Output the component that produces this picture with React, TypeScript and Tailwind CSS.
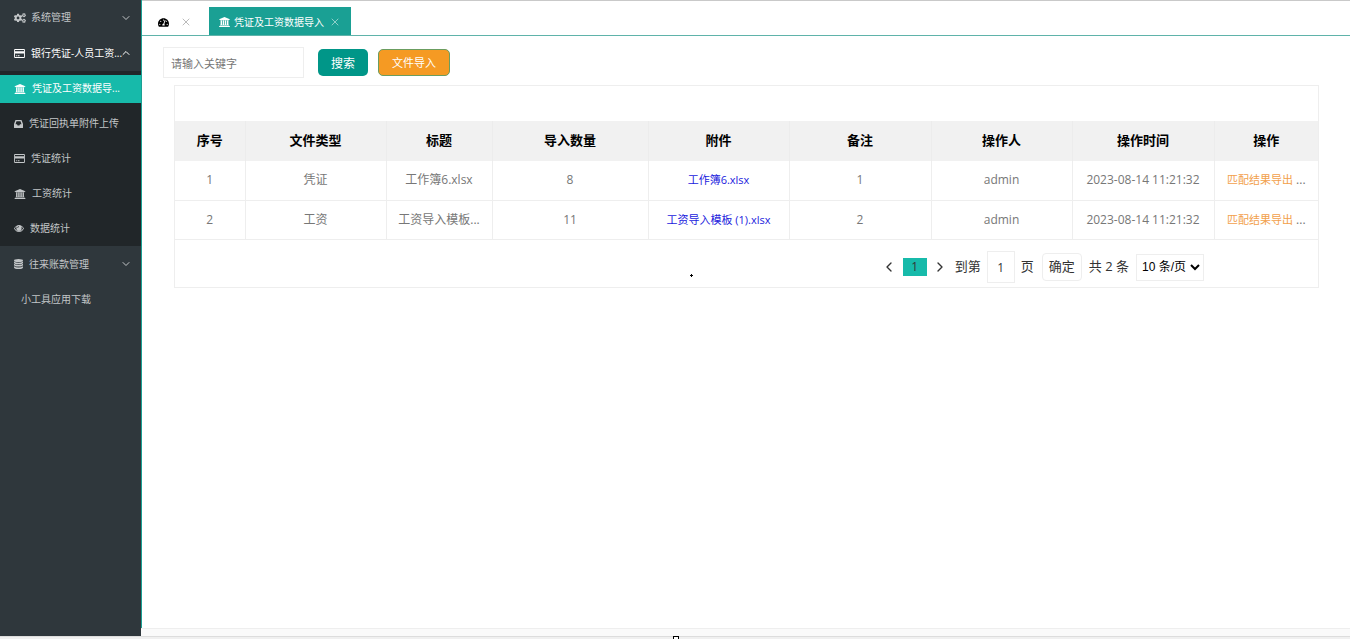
import { useState } from "react";
import { FaCogs, FaTachometerAlt } from "react-icons/fa";
import { ChevronDown, ChevronLeft, ChevronRight, ChevronUp, X } from "lucide-react";
import clsx from "clsx";

type IconProps = { className?: string };

const CardIcon = ({ className }: IconProps) => (
    <svg viewBox="0 0 12 10" className={className} fill="currentColor" aria-hidden="true">
        <path fillRule="evenodd" d="M1 0h10a1 1 0 0 1 1 1v8a1 1 0 0 1-1 1H1a1 1 0 0 1-1-1V1a1 1 0 0 1 1-1zm0 1v1.5h10V1zm0 4v4h10V5zM2 7h1v1H2zm2 0h2v1H4z" />
    </svg>
);

const BankIcon = ({ className }: IconProps) => (
    <svg viewBox="0 0 1920 1792" className={className} fill="currentColor" aria-hidden="true">
        <path d="M960 0l960 384v128h-128q0 26-20.5 45t-48.5 19h-1526q-28 0-48.5-19t-20.5-45h-128v-128zM256 640h256v768h128v-768h256v768h128v-768h256v768h128v-768h256v768h59q28 0 48.5 19t20.5 45v64h-1664v-64q0-26 20.5-45t48.5-19h59v-768zM1851 1600q28 0 48.5 19t20.5 45v128h-1920v-128q0-26 20.5-45t48.5-19h1782z" />
    </svg>
);

const InboxIcon = ({ className }: IconProps) => (
    <svg viewBox="0 0 18 16" className={className} fill="currentColor" aria-hidden="true">
        <path fillRule="evenodd" d="M3 0h12L18 8v7q0 1-1 1H1q-1 0-1-1V8zM5 2.500L3 8.500H6l1.200 2.500h3.600L12 8.500h3L13 2.500z" />
    </svg>
);

const EyeIcon = ({ className }: IconProps) => (
    <svg viewBox="0 0 20 14" className={className} fill="currentColor" aria-hidden="true">
        <path fillRule="evenodd" d="M10 0Q16 0 20 7Q16 14 10 14Q4 14 0 7Q4 0 10 0zM5.500 2.800Q3.200 4 1.700 7Q4.800 12.300 10 12.300Q15.200 12.300 18.300 7Q16.800 4 14.500 2.800Q15.500 4.300 15.300 6.500A5.300 5.300 0 0 1 4.700 6.500Q4.500 4.300 5.500 2.800zM10 2.500Q6.800 2.800 6.600 6h1.300Q8 4 10 3.800z" />
    </svg>
);

const DatabaseIcon = ({ className }: IconProps) => (
    <svg viewBox="0 0 18 20" className={className} fill="currentColor" aria-hidden="true">
        <ellipse cx="9" cy="3" rx="9" ry="3" />
        <path d="M0 5Q3 7.500 9 7.500T18 5v2.500Q17 10.500 9 10.500T0 7.500zM0 9.700Q3 12.200 9 12.200T18 9.700v2.500Q17 15.200 9 15.200T0 12.200zM0 14.400Q3 16.900 9 16.900T18 14.400V17Q17 20 9 20T0 17z" />
    </svg>
);

const subItems = [
    { label: "凭证及工资数据导...", icon: BankIcon, iconSize: "h-2.5 w-3", active: true },
    { label: "凭证回执单附件上传", icon: InboxIcon, iconSize: "h-2 w-[9px]" },
    { label: "凭证统计", icon: CardIcon, iconSize: "h-[9px] w-[11px]" },
    { label: "工资统计", icon: BankIcon, iconSize: "h-2.5 w-3" },
    { label: "数据统计", icon: EyeIcon, iconSize: "h-[7px] w-2.5" },
];

const columns = [
    { title: "序号", width: "w-[70px]" },
    { title: "文件类型", width: "w-[141px]" },
    { title: "标题", width: "w-[106px]" },
    { title: "导入数量", width: "w-[156px]" },
    { title: "附件", width: "w-[141px]" },
    { title: "备注", width: "w-[142px]" },
    { title: "操作人", width: "w-[141px]" },
    { title: "操作时间", width: "w-[142px]" },
    { title: "操作", width: "w-[104px]" },
];

const rows = [
    { id: 1, type: "凭证", title: "工作簿6.xlsx", count: 8, file: "工作簿6.xlsx", remark: "1", user: "admin", time: "2023-08-14 11:21:32" },
    { id: 2, type: "工资", title: "工资导入模板...", count: 11, file: "工资导入模板 (1).xlsx", remark: "2", user: "admin", time: "2023-08-14 11:21:32" },
];

const Sidebar = () => {
    return (
        <nav className="w-[141px] shrink-0 whitespace-nowrap bg-[#2f373c] text-[10px] text-[#c3c6c8]">
            <a href="#system" className="flex h-[35px] items-center pl-3.5 pr-[9px]">
                <FaCogs className="size-3 shrink-0" />
                <span className="ml-[5px] flex-1">系统管理</span>
                <ChevronDown className="size-3 shrink-0" />
            </a>
            <a href="#bank" className="flex h-9 items-center justify-between pl-3.5 pr-[9px] text-white">
                <span className="flex items-center gap-1.5">
                    <CardIcon className="h-[9px] w-[11px] shrink-0" />
                    银行凭证-人员工资...
                </span>
                <ChevronUp className="-ml-1 size-3 shrink-0" />
            </a>
            <ul className="bg-[#212629]">
                {subItems.map((item) => (
                    <li key={item.label} className="flex h-[35px] items-center">
                        <a
                            href="#sub"
                            className={clsx(
                                "flex h-7 w-full items-center gap-1.5 pl-3.5",
                                item.active && "bg-[#17baaa] text-white"
                            )}
                        >
                            <item.icon className={clsx("shrink-0", item.iconSize)} />
                            {item.label}
                        </a>
                    </li>
                ))}
            </ul>
            <a href="#accounts" className="flex h-9 items-center pl-3.5 pr-[9px]">
                <DatabaseIcon className="h-2.5 w-[9px] shrink-0" />
                <span className="ml-1.5 flex-1">往来账款管理</span>
                <ChevronDown className="size-3 shrink-0" />
            </a>
            <a href="#tools" className="flex h-[35px] items-center pl-[21px]">小工具应用下载</a>
        </nav>
    )
};

const TabBar = () => {
    return (
        <div className="border-t border-[#c9c9c9]">
            <div className="flex h-[35px] items-end border-b border-[#5fb3aa] text-[10px]">
                <div className="flex h-7 w-[67px] items-center gap-[11px] pl-4 pt-0.5">
                    <FaTachometerAlt className="size-[11px] text-black" />
                    <button type="button" aria-label="关闭首页"><X className="size-3 text-[#bbbbbb]" /></button>
                </div>
                <div className="flex h-7 items-center bg-[#1aa094] px-2.5 pt-0.5 text-white">
                    <BankIcon className="h-2.5 w-[11px]" />
                    <span className="ml-1">凭证及工资数据导入</span>
                    <button type="button" aria-label="关闭" className="ml-[5px]"><X className="size-3 text-[#8fcfc9]" /></button>
                </div>
            </div>
        </div>
    )
};

const SearchBar = () => {
    const [keyword, setKeyword] = useState("");

    return (
        <form className="flex items-center pl-[21px] pt-[11px]" onSubmit={(e) => e.preventDefault()}>
            <input
                aria-label="关键字"
                value={keyword}
                onChange={(e) => setKeyword(e.target.value)}
                placeholder="请输入关键字"
                className="h-[31px] w-[141px] border border-[#eeeeee] px-[7px] pt-px text-[11px] outline-none placeholder:text-[#757575]"
            />
            <button type="submit" className="ml-3.5 h-[27px] w-[50px] rounded-[5px] bg-[#009688] pt-0.5 text-[12px] text-white">搜索</button>
            <button type="button" className="ml-2.5 h-[27px] w-[72px] rounded-[5px] border border-[#6b9d60] bg-[#f59a23] pt-0.5 text-[11px] text-white">文件导入</button>
        </form>
    )
};

const Pagination = () => {
    const [page, setPage] = useState("1");

    return (
        <div className="flex h-[47px] items-center justify-end pr-[114px] pt-2 text-[13px] text-[#333333]">
            <button type="button" aria-label="上一页"><ChevronLeft className="size-4" strokeWidth={2} /></button>
            <button type="button" className="ml-1.5 flex h-[18px] w-6 items-center justify-center bg-[#17baaa] text-[12px]">1</button>
            <button type="button" aria-label="下一页" className="ml-[5px]"><ChevronRight className="size-4" strokeWidth={2} /></button>
            <label className="ml-[7px] flex items-center">
                到第
                <input
                    value={page}
                    onChange={(e) => setPage(e.target.value)}
                    className="mx-1.5 h-8 w-7 border border-[#eeeeee] text-center text-[12px] outline-none"
                />
                页
            </label>
            <button type="button" className="ml-2 h-7 w-10 rounded-sm border border-[#eeeeee]">确定</button>
            <span className="ml-[7px]">共 2 条</span>
            <select aria-label="每页条数" className="ml-[7px] h-[27px] w-[68px] border border-[#eeeeee] bg-white pl-px font-['Liberation_Sans','Noto_Sans_CJK_SC',sans-serif] text-[12px] text-black">
                <option>10 条/页</option>
                <option>20 条/页</option>
                <option>50 条/页</option>
            </select>
        </div>
    )
};

const VoucherTable = () => {
    return (
        <section className="ml-8 mr-[31px] mt-[7px] border border-[#eeeeee]">
            <div className="h-[35px]" />
            <table className="w-full table-fixed border-collapse text-center text-[12px] text-[#777777]">
                <thead>
                    <tr className="h-10 bg-[#f1f1f1] text-[13px] text-black">
                        {columns.map((column) => (
                            <th key={column.title} className={clsx("border-r border-[#ececec] pb-px font-bold last:border-r-0", column.width)}>
                                {column.title}
                            </th>
                        ))}
                    </tr>
                </thead>
                <tbody className="whitespace-nowrap [&_td]:border-b [&_td]:border-r [&_td]:border-[#eeeeee] [&_td:last-child]:border-r-0">
                    {rows.map((row) => (
                        <tr key={row.id} className="h-[39px]">
                            <td>{row.id}</td>
                            <td>{row.type}</td>
                            <td>{row.title}</td>
                            <td>{row.count}</td>
                            <td><a href="#file" className="text-[11px] text-[#2222dd]">{row.file}</a></td>
                            <td>{row.remark}</td>
                            <td>{row.user}</td>
                            <td>{row.time}</td>
                            <td>
                                <a href="#export" className="text-[11px] text-[#f2a04b]">匹配结果导出</a> ...
                            </td>
                        </tr>
                    ))}
                </tbody>
            </table>
            <Pagination />
        </section>
    )
};

export default function App() {
    return (
        <div className="relative flex min-h-screen flex-col bg-[#f0f0f0] font-['Open_Sans','Noto_Sans_CJK_SC',sans-serif]">
            <div className="flex flex-1">
                <Sidebar />
                <div className="flex min-w-0 flex-1 flex-col">
                    <main className="flex-1 border-l border-[#1aa094] bg-white">
                        <TabBar />
                        <SearchBar />
                        <VoucherTable />
                    </main>
                    <footer className="h-2 border-t border-[#eeeeee] bg-[#fafafa]" />
                </div>
            </div>
            <div className="h-[3px] border-t border-[#dddddd]" />

            {/* pointer marks */}
            <svg className="absolute left-[690px] top-[274px] size-[3px]" viewBox="0 0 3 3" aria-hidden="true">
                <path d="M1 0h1v1h1v1H2v1H1V2H0V1h1z" fill="#000" />
            </svg>
            <div className="absolute bottom-0 left-1/2 -ml-0.5 h-[3px] w-1.5 border border-b-0 border-black bg-white" />
        </div>
    )
}
